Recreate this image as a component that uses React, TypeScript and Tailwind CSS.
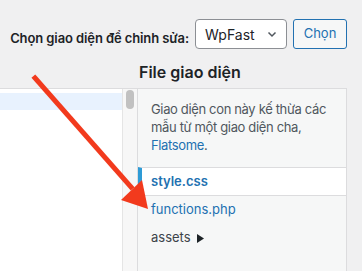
const files = [
  { name: 'style.css', active: true },
  { name: 'functions.php', active: false },
];

function Arrow() {
  return (
    <svg className="pointer-events-none absolute left-0 top-0" width="362" height="271" viewBox="0 0 362 271">
      <line x1="35" y1="78" x2="131" y2="187" stroke="#f23a1d" strokeWidth="5" strokeLinecap="square" />
      <polygon points="148,209 121,200 142,180" fill="#f23a1d" />
    </svg>
  );
}

export default function App() {
  return (
    <div
      className="relative h-[271px] w-[362px] overflow-hidden bg-[#f0f0f1] text-[#1d2327]"
      style={{ fontFamily: 'Inter, "Noto Sans", sans-serif' }}
    >
      <div className="flex h-[67px] items-start justify-end gap-[6px] pr-[15px] pt-[19px]">
        <span className="self-center pb-[8px] text-[13px] font-semibold tracking-[-0.1px]">Chọn giao diện để chỉnh sửa:</span>
        <div className="flex h-[30px] w-[92px] items-center justify-between rounded-[4px] border border-[#8c8f94] bg-white pl-[9px] pr-[8px] text-[14px]">
          <span>WpFast</span>
          <svg width="12" height="12" viewBox="0 0 12 12" fill="none" stroke="#50575e" strokeWidth="1.5">
            <path d="M2.5 4.5 6 8 9.5 4.5" />
          </svg>
        </div>
        <button className="h-[30px] w-[54px] rounded-[3px] border border-[#2271b1] bg-[#f6f7f7] text-[13px] text-[#2271b1]">
          Chọn
        </button>
      </div>

      <div className="flex">
        <div className="flex w-[138px] flex-col pt-[21px]">
          <div className="flex h-[200px] border-t border-r border-[#dcdcde] bg-white">
            <div className="flex-1 border-r border-[#e5e5e5] pt-[4px]">
              <div className="h-[17px] bg-[#e8f2fe]" />
            </div>
            <div className="w-[14px] bg-[#f7f7f7] pl-[3px] pt-[1px]">
              <div className="h-[19px] w-[8px] rounded-full bg-[#c1c1c1]" />
            </div>
          </div>
        </div>

        <div className="w-[209px]">
          <h2 className="h-[21px] pl-[1px] text-[16px] font-semibold leading-[10px]">File giao diện</h2>
          <div className="h-[200px] border-t border-r border-[#dcdcde] bg-[#f6f7f7]">
            <p className="pl-[13px] pr-[4px] pt-[11px] text-[13px] leading-[18px] tracking-[-0.35px] text-[#50575e]">
              Giao diện con này kế thừa các mẫu từ một giao diện cha,{' '}
              <span className="text-[#2271b1]">Flatsome</span>.
            </p>
            <ul className="mt-[13px]">
              {files.map((f) =>
                f.active ? (
                  <li
                    key={f.name}
                    className="flex h-[29px] items-center border-y border-[#dcdcde] border-l-4 border-l-[#2e9bd6] bg-white pl-[9px] text-[13px] font-semibold text-[#2271b1]"
                  >
                    {f.name}
                  </li>
                ) : (
                  <li key={f.name} className="flex h-[28px] items-center pl-[13px] text-[13px] text-[#2271b1]">
                    {f.name}
                  </li>
                )
              )}
              <li className="flex h-[28px] items-center gap-[6px] pl-[13px] text-[13px] text-[#3c434a]">
                assets
                <svg width="7" height="9" viewBox="0 0 7 9">
                  <polygon points="0,0 7,4.5 0,9" fill="#1d2327" />
                </svg>
              </li>
            </ul>
          </div>
        </div>
      </div>

      <Arrow />
    </div>
  );
}
